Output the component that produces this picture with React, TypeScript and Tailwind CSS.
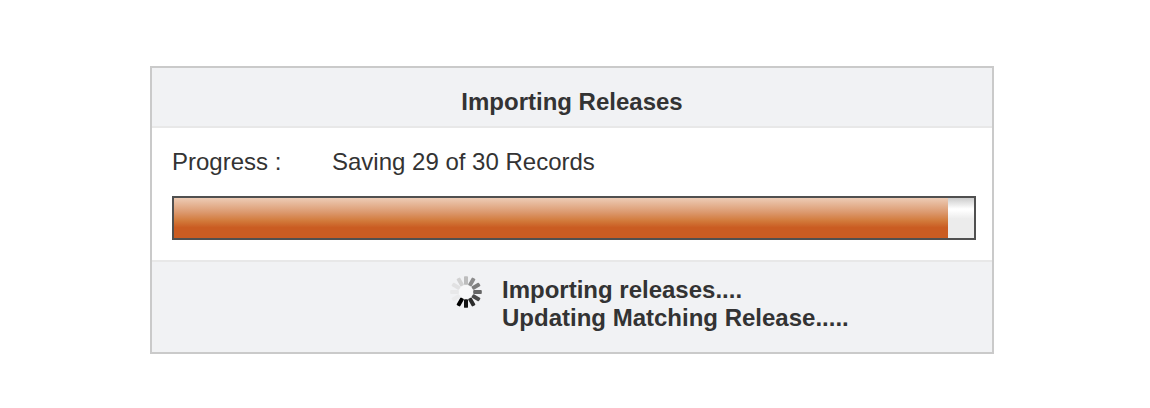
const spokes = [
  { angle: 0, color: "#bdbdbd" },
  { angle: 30, color: "#8c8c8c" },
  { angle: 60, color: "#7d7d7d" },
  { angle: 90, color: "#666666" },
  { angle: 120, color: "#4b4b4b" },
  { angle: 150, color: "#2c2c2c" },
  { angle: 180, color: "#141414" },
  { angle: 210, color: "#000000" },
  { angle: 240, color: "#ebebec" },
  { angle: 270, color: "#e8e8e9" },
  { angle: 300, color: "#e1e1e2" },
  { angle: 330, color: "#d2d2d2" },
];

function Spinner() {
  return (
    <svg width="32" height="32" viewBox="-16 -16 32 32" className="mt-[14px] shrink-0 overflow-visible blur-[0.5px]" aria-hidden="true">
      <circle r="7" fill="#f8f8f9" />
      {spokes.map((s) => (
        <rect key={s.angle} x="-2" y="-15.8" width="4" height="8.6" rx="0.9" fill={s.color} transform={`rotate(${s.angle})`} />
      ))}
    </svg>
  );
}

export default function App() {
  return (
    <main className="flex h-[408px] w-[1150px] items-start bg-white pt-[66px] pl-[150px] font-['Liberation_Sans',Arial,sans-serif] text-[24px] leading-[28px] text-[#333333]">
      <section className="flex h-[288px] w-[844px] flex-col border-2 border-[#cacaca] bg-white">
        <header className="h-[60px] border-b-2 border-[#e8e8e8] bg-[#f1f2f4] pt-5 text-center font-bold">Importing Releases</header>
        <div className="flex h-[132px] flex-col pt-5 pl-5">
          <div className="flex">
            <span className="w-[160px]">Progress :</span>
            <span>Saving 29 of 30 Records</span>
          </div>
          <div className="mt-5 h-11 w-[804px] border-2 border-[#505050] bg-[linear-gradient(to_bottom,#cccccc_0%,#ffffff_27%,#ffffff_30%,#ececec_52%)]">
            <div className="h-full w-[774px] bg-[linear-gradient(to_bottom,#edcbb5_0%,#dc9a70_35%,#d27a3b_57%,#ca5c22_74%)]" />
          </div>
        </div>
        <footer className="flex flex-1 border-t-2 border-[#e8e8e8] bg-[#f1f2f4] pl-[298px]">
          <Spinner />
          <p className="pt-[14px] pl-5 font-bold">
            Importing releases....
            <br />
            Updating Matching Release.....
          </p>
        </footer>
      </section>
    </main>
  );
}
